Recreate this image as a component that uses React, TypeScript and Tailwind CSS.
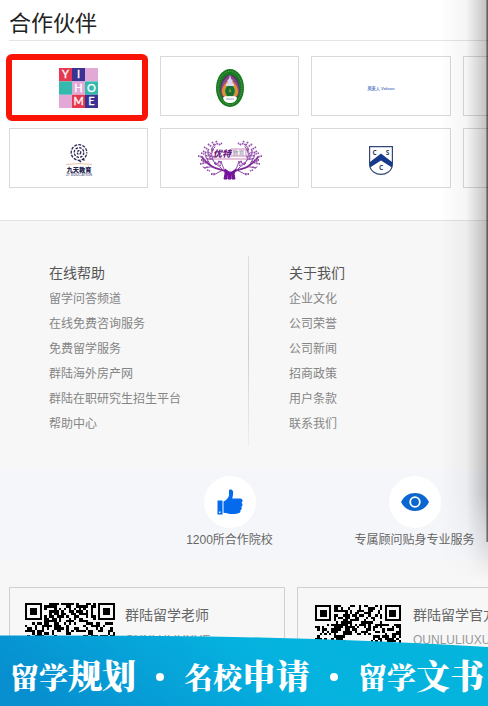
import type { ReactNode } from 'react';

const helpLinks = ['留学问答频道', '在线免费咨询服务', '免费留学服务', '群陆海外房产网', '群陆在职研究生招生平台', '帮助中心'];
const aboutLinks = ['企业文化', '公司荣誉', '公司新闻', '招商政策', '用户条款', '联系我们'];

const slogans = [
  ['留学', '规划'],
  ['名校', '申请'],
  ['留学', '文书'],
];

function YihomeLogo() {
  const tiles = [
    ['#e63950', 'Y'], ['#3b3192', 'I'], ['#e3a9d6', ''],
    ['#35b9ae', ''], ['#e3a9d6', 'H'], ['#35b9ae', 'O'],
    ['#e3a9d6', ''], ['#e63950', 'M'], ['#3b3192', 'E'],
  ];
  return (
    <svg viewBox="0 0 39 40" className="w-[39px] h-10" role="img" aria-label="YI HOME">
      {tiles.map(([color, letter], i) => {
        const x = (i % 3) * 13;
        const y = Math.floor(i / 3) * 13.4;
        return (
          <g key={i}>
            <rect x={x} y={y} width="13" height="13.4" fill={color} />
            <text x={x + 6.5} y={y + 10.4} fontSize="11" fontFamily="Lato, sans-serif" fill="#fff" stroke="#fff" strokeWidth="0.300" textAnchor="middle">{letter}</text>
          </g>
        );
      })}
    </svg>
  );
}

function UniversityLogo() {
  return (
    <svg viewBox="0 0 28 38" className="w-7 h-[38px]" role="img" aria-label="University emblem">
      <ellipse cx="14" cy="19" rx="14" ry="19" fill="#177a22" />
      <ellipse cx="14" cy="19" rx="11.8" ry="16.6" fill="none" stroke="#7fae58" strokeWidth="1" strokeDasharray="1 1.4" />
      <ellipse cx="14" cy="19.5" rx="9.6" ry="13.6" fill="#57306f" />
      <path d="M5 22C5 14 9 9 14 6c5 3 9 8 9 16 0 5-4 8-9 8s-9-3-9-8z" fill="#8e4a86" />
      <path d="M6 23c0-6 4-10 8-13 4 3 8 7 8 13 0 4-3 6-8 6s-8-2-8-6z" fill="#e98936" />
      <ellipse cx="14" cy="22" rx="6" ry="7" fill="#b6a33a" />
      <ellipse cx="14" cy="22" rx="4.8" ry="6" fill="#176f32" />
      <path d="M14 6l1 4 1.5 1v3l1.5 1v2h-8v-2l1.500-1v-3l1.500-1z" fill="#dbd8ef" />
      <path d="M14 19l1.500 4h-3z" fill="#75a02f" />
      <path d="M7 29c2-3 4-1 7-2 3 1 5-1 7 2-1 4-4 5-7 5s-6-1-7-5z" fill="#fff" />
      <path d="M10 30h8" stroke="#9aa3c8" strokeWidth="1" />
    </svg>
  );
}

function JiutianLogo() {
  return (
    <svg viewBox="0 0 28 34" className="w-7 h-[34px]" role="img" aria-label="九天教育">
      <g fill="none" stroke="#272550" strokeWidth="1.300">
        <circle cx="14" cy="9.500" r="7.800" strokeDasharray="3 1.200" strokeDashoffset="2" />
        <circle cx="14" cy="9.500" r="4.800" strokeDasharray="2.500 1.200" />
        <circle cx="14" cy="9.500" r="1.800" strokeDasharray="2 1" />
        <path d="M14 17.500l2 1.500M18 16l1.500 1.500" />
      </g>
      <path d="M1 21.500q13-2 26 0" stroke="#e2ae8b" fill="none" strokeWidth="0.800" />
      <text x="14" y="28.500" fontSize="6.200" fontWeight="900" fontFamily="'Noto Sans CJK SC', sans-serif" fill="#262450" textAnchor="middle">九天教育</text>
      <text x="14" y="33" fontSize="3.600" fontWeight="700" fontFamily="'Liberation Sans', sans-serif" fill="#77789c" textAnchor="middle">JT EDUCATION</text>
    </svg>
  );
}

function TreeHalf() {
  return (
    <g>
      <g fill="none" stroke="#7c2b96" strokeLinecap="round">
        <path d="M30 33C24 28 20 30 15 27S7 22 4 17" strokeWidth="1.800" />
        <path d="M24 29c-3-4-7-4-9-9s-2-9 2-13M15 27c-4-1-7 2-10 0M12 25c-1-5-5-6-5-12M15 20c-4-2-6-6-5-10M14 12c-1-3 1-6 4-8M26 29c-2-3-1-6-5-8M25 30c-3 2-7 3-9 5" strokeWidth="0.900" />
      </g>
      <path
        d="M0 16l5 1M3 20h4M2 24l5-1M5 11l4 2M6 7l5 3M10 4l4 3M14 2l3 4M18 1l2 4M21 5l3-2M8 16l4-1M10 21l-3 2M12 16l5 1M16 10l4-1M9 30l3 1M6 28l4-1M16 23l5 1M13 34l4 0M5 22l2-3M13 9l4 1M18 25l-1-3M3 13l3 1M10 12l3 2M20 22l4 0M9 19l5 0M22 26l1-3"
        stroke="#9550ab"
        strokeWidth="1.800"
        strokeDasharray="1.600 0.700"
      />
    </g>
  );
}

function TreeLogo() {
  return (
    <svg viewBox="0 0 64 40" className="w-16 h-10" role="img" aria-label="优特">
      <TreeHalf />
      <g transform="translate(64 0) scale(-1 1)">
        <TreeHalf />
      </g>
      <path d="M27 29l4 3h3l4-3-2 5 1 5h-3v-4h-1v4h-3v-4h-1v4h-3l1-5z" fill="#74149a" stroke="#74149a" />
      <path d="M16 8h32v12H16z" fill="#fff" />
      <path d="M15 19h35M33 9h15v7H33" fill="none" stroke="#c06aa9" strokeWidth="0.800" />
      <text x="15" y="16.500" fontSize="9" fontWeight="900" fontStyle="italic" fontFamily="'Noto Sans CJK SC', sans-serif" fill="#6d1c82">优特</text>
      <text x="34.500" y="15" fontSize="6" fontWeight="700" fontFamily="'Noto Sans CJK SC', sans-serif" fill="#b3a8b8">教育</text>
    </svg>
  );
}

function ShieldLogo() {
  return (
    <svg viewBox="0 0 24 29" className="w-6 h-[29px]" role="img" aria-label="CSC">
      <path d="M.6.6h22.800v18.400C23 25 17 28.400 12 28.400S1 25 .6 19z" fill="#fff" stroke="#324875" strokeWidth="1.200" />
      <path d="M1 16L12 7.500 23 16v5.500L12 14.500 1 21.500z" fill="#173a8c" />
      <g fontSize="6.500" fontWeight="700" fontFamily="'Open Sans', sans-serif" fill="#273a63" textAnchor="middle">
        <text x="5.500" y="9">C</text>
        <text x="18.500" y="9">S</text>
        <text x="12" y="24">C</text>
      </g>
    </svg>
  );
}

const QR_SIZE = 37;

function inFinder(x: number, y: number) {
  const right = x >= QR_SIZE - 8;
  const bottom = y >= QR_SIZE - 8;
  return (x < 8 && y < 8) || (right && y < 8) || (x < 8 && bottom);
}

function QrCode({ seed, label, className }: { seed: number; label: string; className: string }) {
  let d = '';
  let state = seed;
  for (let y = 0; y < QR_SIZE; y++) {
    for (let x = 0; x < QR_SIZE; x++) {
      state = (Math.imul(state, 1664525) + 1013904223) >>> 0;
      const inLogo = Math.abs(x - 18) < 6 && Math.abs(y - 18) < 6;
      if (!inFinder(x, y) && !inLogo && (state >>> 16) % 100 < 52) d += `M${x} ${y}h1v1h-1z`;
    }
  }
  return (
    <svg viewBox="0 0 37 37" className={className} shapeRendering="crispEdges" role="img" aria-label={label}>
      <path d={d} />
      {[[0, 0], [30, 0], [0, 30]].map(([x, y]) => (
        <g key={`${x}-${y}`} transform={`translate(${x} ${y})`}>
          <path d="M0 0h7v7H0zM1 1v5h5V1z" fillRule="evenodd" />
          <path d="M2 2h3v3H2z" />
        </g>
      ))}
    </svg>
  );
}

function Partner({ highlighted, children }: { highlighted?: boolean; children?: ReactNode }) {
  return (
    <li className="relative flex h-[60px] items-center justify-center border border-[#d9d9d9] pt-1">
      {children}
      {highlighted && <span className="absolute -top-[3px] -right-px -bottom-1.5 -left-1 rounded-md border-6 border-[#fa1405]" />}
    </li>
  );
}

function LinkColumn({ title, links }: { title: string; links: string[] }) {
  return (
    <div className="h-[190px] w-60 shrink-0 pt-[3px]">
      <h3 className="text-sm leading-7 text-[#555]">{title}</h3>
      <ul>
        {links.map((link) => (
          <li key={link} className="text-xs leading-[25px] text-[#858585]">
            <a href="#">{link}</a>
          </li>
        ))}
      </ul>
    </div>
  );
}

function Feature({ icon, label }: { icon: ReactNode; label: string }) {
  return (
    <div className="flex w-[185px] shrink-0 flex-col items-center gap-0.5">
      <div className="flex size-[52px] items-center justify-center rounded-full bg-white">{icon}</div>
      <p className="text-xs leading-5 text-[#666]">{label}</p>
    </div>
  );
}

function ThumbIcon() {
  return (
    <svg viewBox="0 0 26 26" className="size-[26px]" fill="#056aeb">
      <path d="M0.500 11.500h5v14h-5zM2 22.500v1.500h1.500v-1.500z" fillRule="evenodd" />
      <path d="M6.500 12.500C9 11.500 11.500 9 12 6.500V1.500C12 0 15.500 0 16 2.500c.4 2.500-.2 4.500-.8 7h8c2.600 0 3.200 3.200 1.200 4.200 1.600 1 1.400 3.200-.2 4 1 1.200.6 3-.9 3.600.6 1.400-.4 2.700-1.800 2.900-3 .9-8 1.300-10.500.3-1.500-.6-2.800-.8-4.500-.8z" />
    </svg>
  );
}

function EyeIcon() {
  return (
    <svg viewBox="0 0 28 18" className="h-[18px] w-7">
      <path d="M0 9C3 3 8 0 14 0s11 3 14 9c-3 6-8 9-14 9S3 15 0 9z" fill="#0c66cf" />
      <circle cx="14" cy="9" r="4.800" fill="none" stroke="#fff" strokeWidth="1.800" />
    </svg>
  );
}

function QrCard({ title, account, children }: { title: string; account: string; children: ReactNode }) {
  return (
    <div className="flex h-[119px] w-[276px] shrink-0 border border-[#d0d0d0] pt-[15px]">
      {children}
      <div className="whitespace-nowrap">
        <h4 className="text-sm leading-6 text-[#666]">{title}</h4>
        <p className="text-xs leading-[26px] text-[#999]">{account}</p>
      </div>
    </div>
  );
}

function Banner() {
  return (
    <div className="absolute inset-x-0 bottom-0 h-[71px]">
      <svg viewBox="0 0 488 71" preserveAspectRatio="none" className="absolute inset-0 h-full w-full">
        <defs>
          <linearGradient id="banner" x1="0" y1="0.500" x2="1" y2="0.300">
            <stop offset="0" stopColor="#078fd0" />
            <stop offset="0.550" stopColor="#05b2df" />
            <stop offset="1" stopColor="#04b5dc" />
          </linearGradient>
        </defs>
        <path d="M0 0.500Q150 0 260 2.500T488 12V71H0z" fill="url(#banner)" />
      </svg>
      <p className="relative flex items-center justify-between pt-5 pr-1 pl-2.5 font-['Liberation_Serif','Noto_Serif_CJK_SC','Noto_Sans_CJK_SC',serif] font-black whitespace-nowrap text-white">
        {slogans.map(([lead, rest], i) => (
          <span key={i} className="contents">
            {i > 0 && <span className="mb-1 size-2 rounded-full bg-white" />}
            <span className="text-[34px] leading-[46px]">
              <span className="text-[29px]">{lead}</span>
              {rest}
            </span>
          </span>
        ))}
      </p>
    </div>
  );
}

export default function App() {
  return (
    <div className="relative min-h-screen overflow-hidden bg-[#f7f7f7] font-['Liberation_Sans','Noto_Sans_CJK_SC',sans-serif]">
      <section className="bg-white pb-8 pl-[9px]">
        <h2 className="border-b border-[#e4e4e4] pt-2 text-[22px] leading-8 text-[#222]">合作伙伴</h2>
        <ul className="mt-[15px] grid grid-cols-[139px_139px_140px_139px] gap-3">
          <Partner highlighted><YihomeLogo /></Partner>
          <Partner><UniversityLogo /></Partner>
          <Partner>
            <svg viewBox="0 0 30 6" className="h-1.5 w-[30px]" role="img" aria-label="Valeon">
              <text x="15" y="5" fontSize="4.200" fontWeight="700" fontFamily="'Liberation Sans', 'Noto Sans CJK SC', sans-serif" fill="#637fc5" textAnchor="middle">凤来人 Valeon</text>
            </svg>
          </Partner>
          <Partner />
          <Partner><JiutianLogo /></Partner>
          <Partner><TreeLogo /></Partner>
          <Partner><ShieldLogo /></Partner>
          <Partner />
        </ul>
      </section>

      <footer className="border-t border-[#e2e2e2]">
        <nav className="flex pt-[35px] pl-[49px]">
          <LinkColumn title="在线帮助" links={helpLinks} />
          <div className="-ml-[41px] mr-10 w-px shrink-0 bg-linear-to-b from-[#dedede] via-[#cfcfcf] to-[#eeeeee]" />
          <LinkColumn title="关于我们" links={aboutLinks} />
        </nav>
        <div className="mt-6 flex bg-[#f5f6f9] pt-1.5 pb-[9px] pl-[137px]">
          <Feature icon={<ThumbIcon />} label="1200所合作院校" />
          <Feature icon={<EyeIcon />} label="专属顾问贴身专业服务" />
        </div>
        <div className="mt-7 flex gap-3 pl-[9px]">
          <QrCard title="群陆留学老师" account="QUNLULIUXUE">
            <QrCode seed={71} label="群陆留学老师" className="mr-[10px] ml-[15px] size-[90px]" />
          </QrCard>
          <QrCard title="群陆留学官方" account="QUNLULIUXU">
            <QrCode seed={2024} label="群陆留学官方" className="mt-0.5 mr-3 ml-[17px] size-[86px]" />
          </QrCard>
        </div>
      </footer>

      <div className="pointer-events-none absolute top-0 right-0 h-[580px] w-12 bg-linear-to-r from-transparent from-0% via-black/4 via-55% to-black/25 to-100% mask-linear-[180deg,black_85%,transparent]" />
      <div className="pointer-events-none absolute top-0 right-0 h-[542px] w-0.5 bg-linear-to-r from-black/20 to-black/60" />
      <Banner />
    </div>
  );
}
